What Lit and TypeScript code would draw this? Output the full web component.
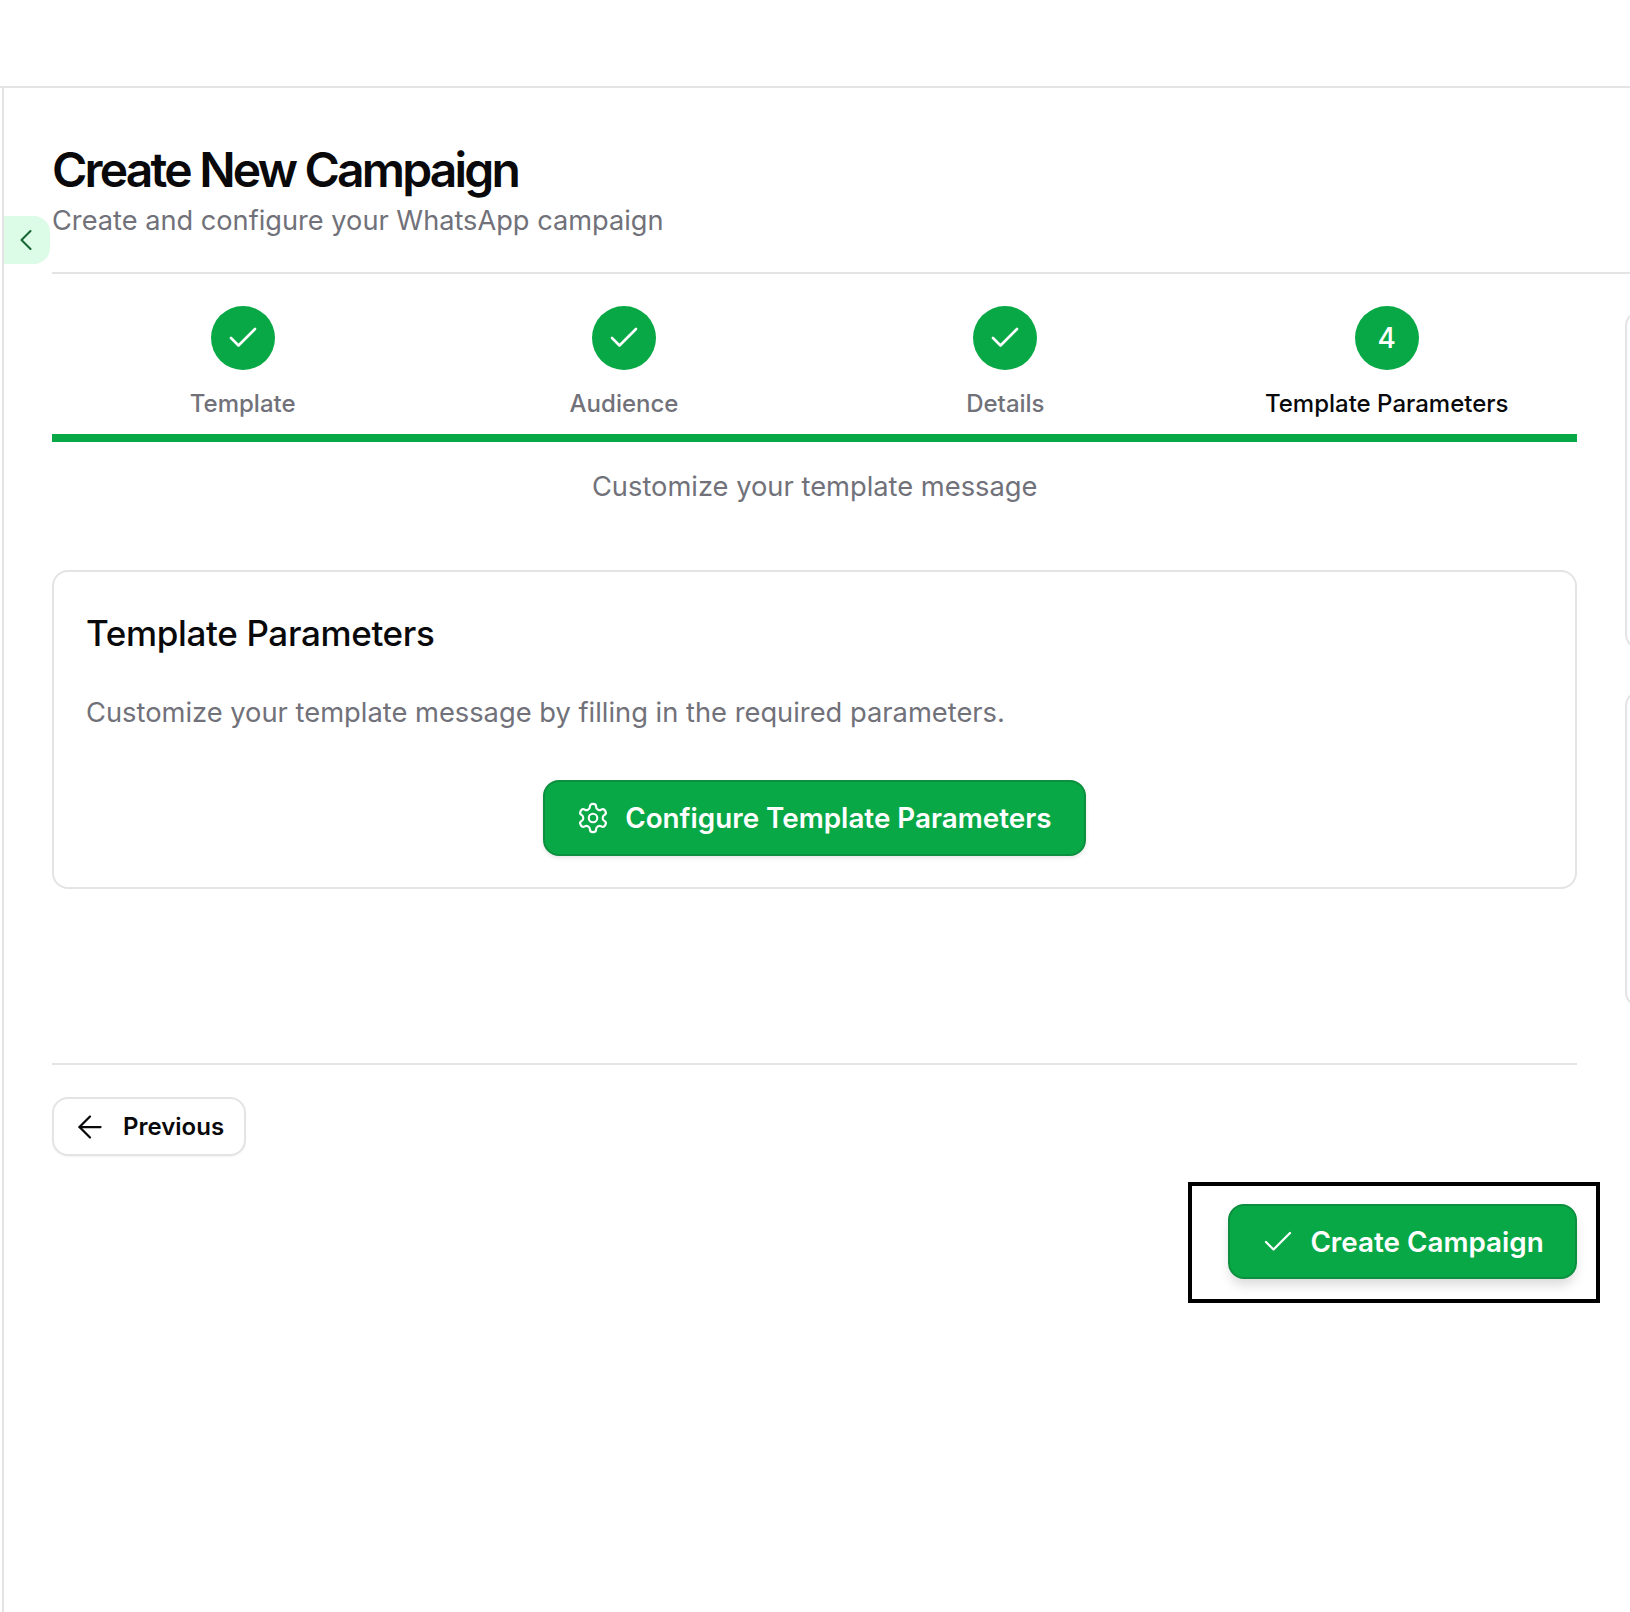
import { LitElement, html, css } from "lit";
import { customElement } from "lit/decorators.js";

const check = html`<svg viewBox="0 0 24 24"><path d="M20 6 9 17l-5-5" /></svg>`;

const gear = html`<svg viewBox="0 0 24 24">
  <path
    d="M12.22 2h-.44a2 2 0 0 0-2 2v.18a2 2 0 0 1-1 1.73l-.43.25a2 2 0 0 1-2 0l-.15-.08a2 2 0 0 0-2.73.73l-.22.38a2 2 0 0 0 .73 2.73l.15.1a2 2 0 0 1 1 1.72v.51a2 2 0 0 1-1 1.74l-.15.09a2 2 0 0 0-.73 2.73l.22.38a2 2 0 0 0 2.73.73l.15-.08a2 2 0 0 1 2 0l.43.25a2 2 0 0 1 1 1.73V20a2 2 0 0 0 2 2h.44a2 2 0 0 0 2-2v-.18a2 2 0 0 1 1-1.73l.43-.25a2 2 0 0 1 2 0l.15.08a2 2 0 0 0 2.73-.73l.22-.39a2 2 0 0 0-.73-2.73l-.15-.08a2 2 0 0 1-1-1.74v-.5a2 2 0 0 1 1-1.74l.15-.09a2 2 0 0 0 .73-2.73l-.22-.38a2 2 0 0 0-2.73-.73l-.15.08a2 2 0 0 1-2 0l-.43-.25a2 2 0 0 1-1-1.73V4a2 2 0 0 0-2-2z"
  />
  <circle cx="12" cy="12" r="3" />
</svg>`;

const steps = [
  { label: "Template", done: true },
  { label: "Audience", done: true },
  { label: "Details", done: true },
  { label: "Template Parameters", done: false },
];

@customElement("app-root")
export class AppRoot extends LitElement {
  static styles = css`
    :host {
      display: block;
      height: 1612px;
      overflow: hidden;
      background: #fff;
      color: #09090b;
      font-family: "Inter", sans-serif;
    }

    svg {
      display: block;
      flex: none;
      fill: none;
      stroke: currentColor;
      stroke-linecap: round;
      stroke-linejoin: round;
    }

    .topbar {
      height: 86px;
      border-bottom: 2px solid #e4e4e7;
    }

    .shell {
      position: relative;
      margin-left: 2px;
      height: 1524px;
      border-left: 2px solid #e4e4e7;
      padding-left: 48px;
    }

    .collapse {
      position: absolute;
      left: 0;
      top: 128px;
      box-sizing: border-box;
      width: 46px;
      height: 48px;
      padding-right: 2px;
      border-radius: 0 16px 16px 0;
      background: #dcfce7;
      color: #166534;
      display: flex;
      align-items: center;
      justify-content: center;
    }

    .collapse svg {
      width: 36px;
      height: 36px;
      stroke-width: 1.4;
    }

    .head {
      padding-top: 58px;
      height: 126px;
      border-bottom: 2px solid #e4e4e7;
      box-sizing: content-box;
    }

    h1 {
      margin: 0;
      font-size: 48px;
      line-height: 48px;
      font-weight: 600;
      letter-spacing: -2.8px;
    }

    .sub {
      margin-top: 7px;
      font-size: 27.2px;
      line-height: 40px;
      color: #71717a;
    }

    .row {
      display: flex;
      gap: 48px;
    }

    .main {
      flex: none;
      width: 1525.4px;
    }

    .aside {
      flex: none;
      width: 400px;
      padding-top: 36px;
      display: flex;
      flex-direction: column;
      gap: 40px;
    }

    .aside div {
      flex: none;
      border: 2px solid #e4e4e7;
      border-radius: 16px;
      box-sizing: border-box;
    }

    .aside .a {
      height: 340px;
    }

    .aside .b {
      height: 318px;
    }

    .steps {
      display: grid;
      grid-template-columns: repeat(4, 1fr);
      padding-top: 32px;
    }

    .step {
      display: flex;
      flex-direction: column;
      align-items: center;
      gap: 18px;
      color: #71717a;
      font-size: 24px;
      line-height: 32px;
      font-weight: 500;
    }

    .step.active {
      color: #09090b;
    }

    .dot {
      width: 64px;
      height: 64px;
      border-radius: 50%;
      background: #08a846;
      color: #fff;
      display: flex;
      align-items: center;
      justify-content: center;
      font-size: 28px;
      font-weight: 500;
    }

    .dot svg {
      width: 36px;
      height: 36px;
      stroke-width: 1.75;
    }

    .bar {
      height: 8px;
      margin-top: 14px;
      background: #08a846;
    }

    .hint {
      margin-top: 25px;
      text-align: center;
      font-size: 27.3px;
      line-height: 40px;
      color: #71717a;
    }

    .card {
      margin-top: 63px;
      height: 319px;
      box-sizing: border-box;
      border: 2px solid #e4e4e7;
      border-radius: 16px;
      padding: 41px 32px 0;
    }

    h2 {
      margin: 0;
      font-size: 35px;
      line-height: 40px;
      font-weight: 500;
      letter-spacing: -0.35px;
    }

    .card p {
      margin: 40px 0 0;
      font-size: 27.3px;
      line-height: 40px;
      color: #71717a;
    }

    .center {
      display: flex;
      justify-content: center;
      margin-top: 47px;
    }

    .btn {
      display: flex;
      align-items: center;
      box-sizing: border-box;
      height: 76px;
      border: 2px solid #0c8f3e;
      border-radius: 16px;
      background: #08a846;
      color: #fff;
      font-size: 27.8px;
      font-weight: 600;
      white-space: nowrap;
      box-shadow: 0 2px 4px rgba(0, 0, 0, 0.1);
    }

    .config {
      width: 543px;
      padding-left: 31px;
      gap: 15px;
    }

    .config svg {
      width: 34px;
      height: 34px;
      stroke-width: 1.5;
    }

    .foot {
      margin-top: 174px;
      border-top: 2px solid #e4e4e7;
      padding-top: 32px;
    }

    .prev {
      display: flex;
      align-items: center;
      gap: 15px;
      box-sizing: border-box;
      width: 194px;
      height: 59px;
      padding-left: 18px;
      border: 2px solid #e4e4e7;
      border-radius: 16px;
      background: #fff;
      font-size: 24px;
      font-weight: 600;
      box-shadow: 0 1px 2px rgba(0, 0, 0, 0.05);
    }

    .prev svg {
      width: 36px;
      height: 36px;
      stroke-width: 1.5;
    }

    .submit-wrap {
      display: flex;
      justify-content: flex-end;
      margin-top: 26px;
      margin-right: -23px;
    }

    .mark {
      box-sizing: border-box;
      width: 412px;
      height: 121px;
      border: 4px solid #000;
      padding: 18px 19px 0 36px;
    }

    .create {
      width: 349px;
      height: 75px;
      padding-left: 30px;
      gap: 14px;
      box-shadow: 0 8px 12px -2px rgba(0, 0, 0, 0.15);
    }

    .create svg {
      width: 36px;
      height: 36px;
      stroke-width: 1.5;
    }
  `;

  render() {
    return html`
      <div class="topbar"></div>
      <div class="shell">
        <div class="collapse">
          <svg viewBox="0 0 24 24"><path d="m15 18-6-6 6-6" /></svg>
        </div>
        <div class="head">
          <h1>Create New Campaign</h1>
          <div class="sub">Create and configure your WhatsApp campaign</div>
        </div>
        <div class="row">
          <div class="main">
            <div class="steps">
              ${steps.map(
                (s, i) => html`
                  <div class="step ${s.done ? "" : "active"}">
                    <div class="dot">${s.done ? check : i + 1}</div>
                    <span>${s.label}</span>
                  </div>
                `
              )}
            </div>
            <div class="bar"></div>
            <div class="hint">Customize your template message</div>
            <div class="card">
              <h2>Template Parameters</h2>
              <p>Customize your template message by filling in the required parameters.</p>
              <div class="center">
                <div class="btn config">${gear}<span>Configure Template Parameters</span></div>
              </div>
            </div>
            <div class="foot">
              <div class="prev">
                <svg viewBox="0 0 24 24"><path d="m12 19-7-7 7-7" /><path d="M19 12H5" /></svg>
                <span>Previous</span>
              </div>
              <div class="submit-wrap">
                <div class="mark">
                  <div class="btn create">${check}<span>Create Campaign</span></div>
                </div>
              </div>
            </div>
          </div>
          <div class="aside">
            <div class="a"></div>
            <div class="b"></div>
          </div>
        </div>
      </div>
    `;
  }
}
